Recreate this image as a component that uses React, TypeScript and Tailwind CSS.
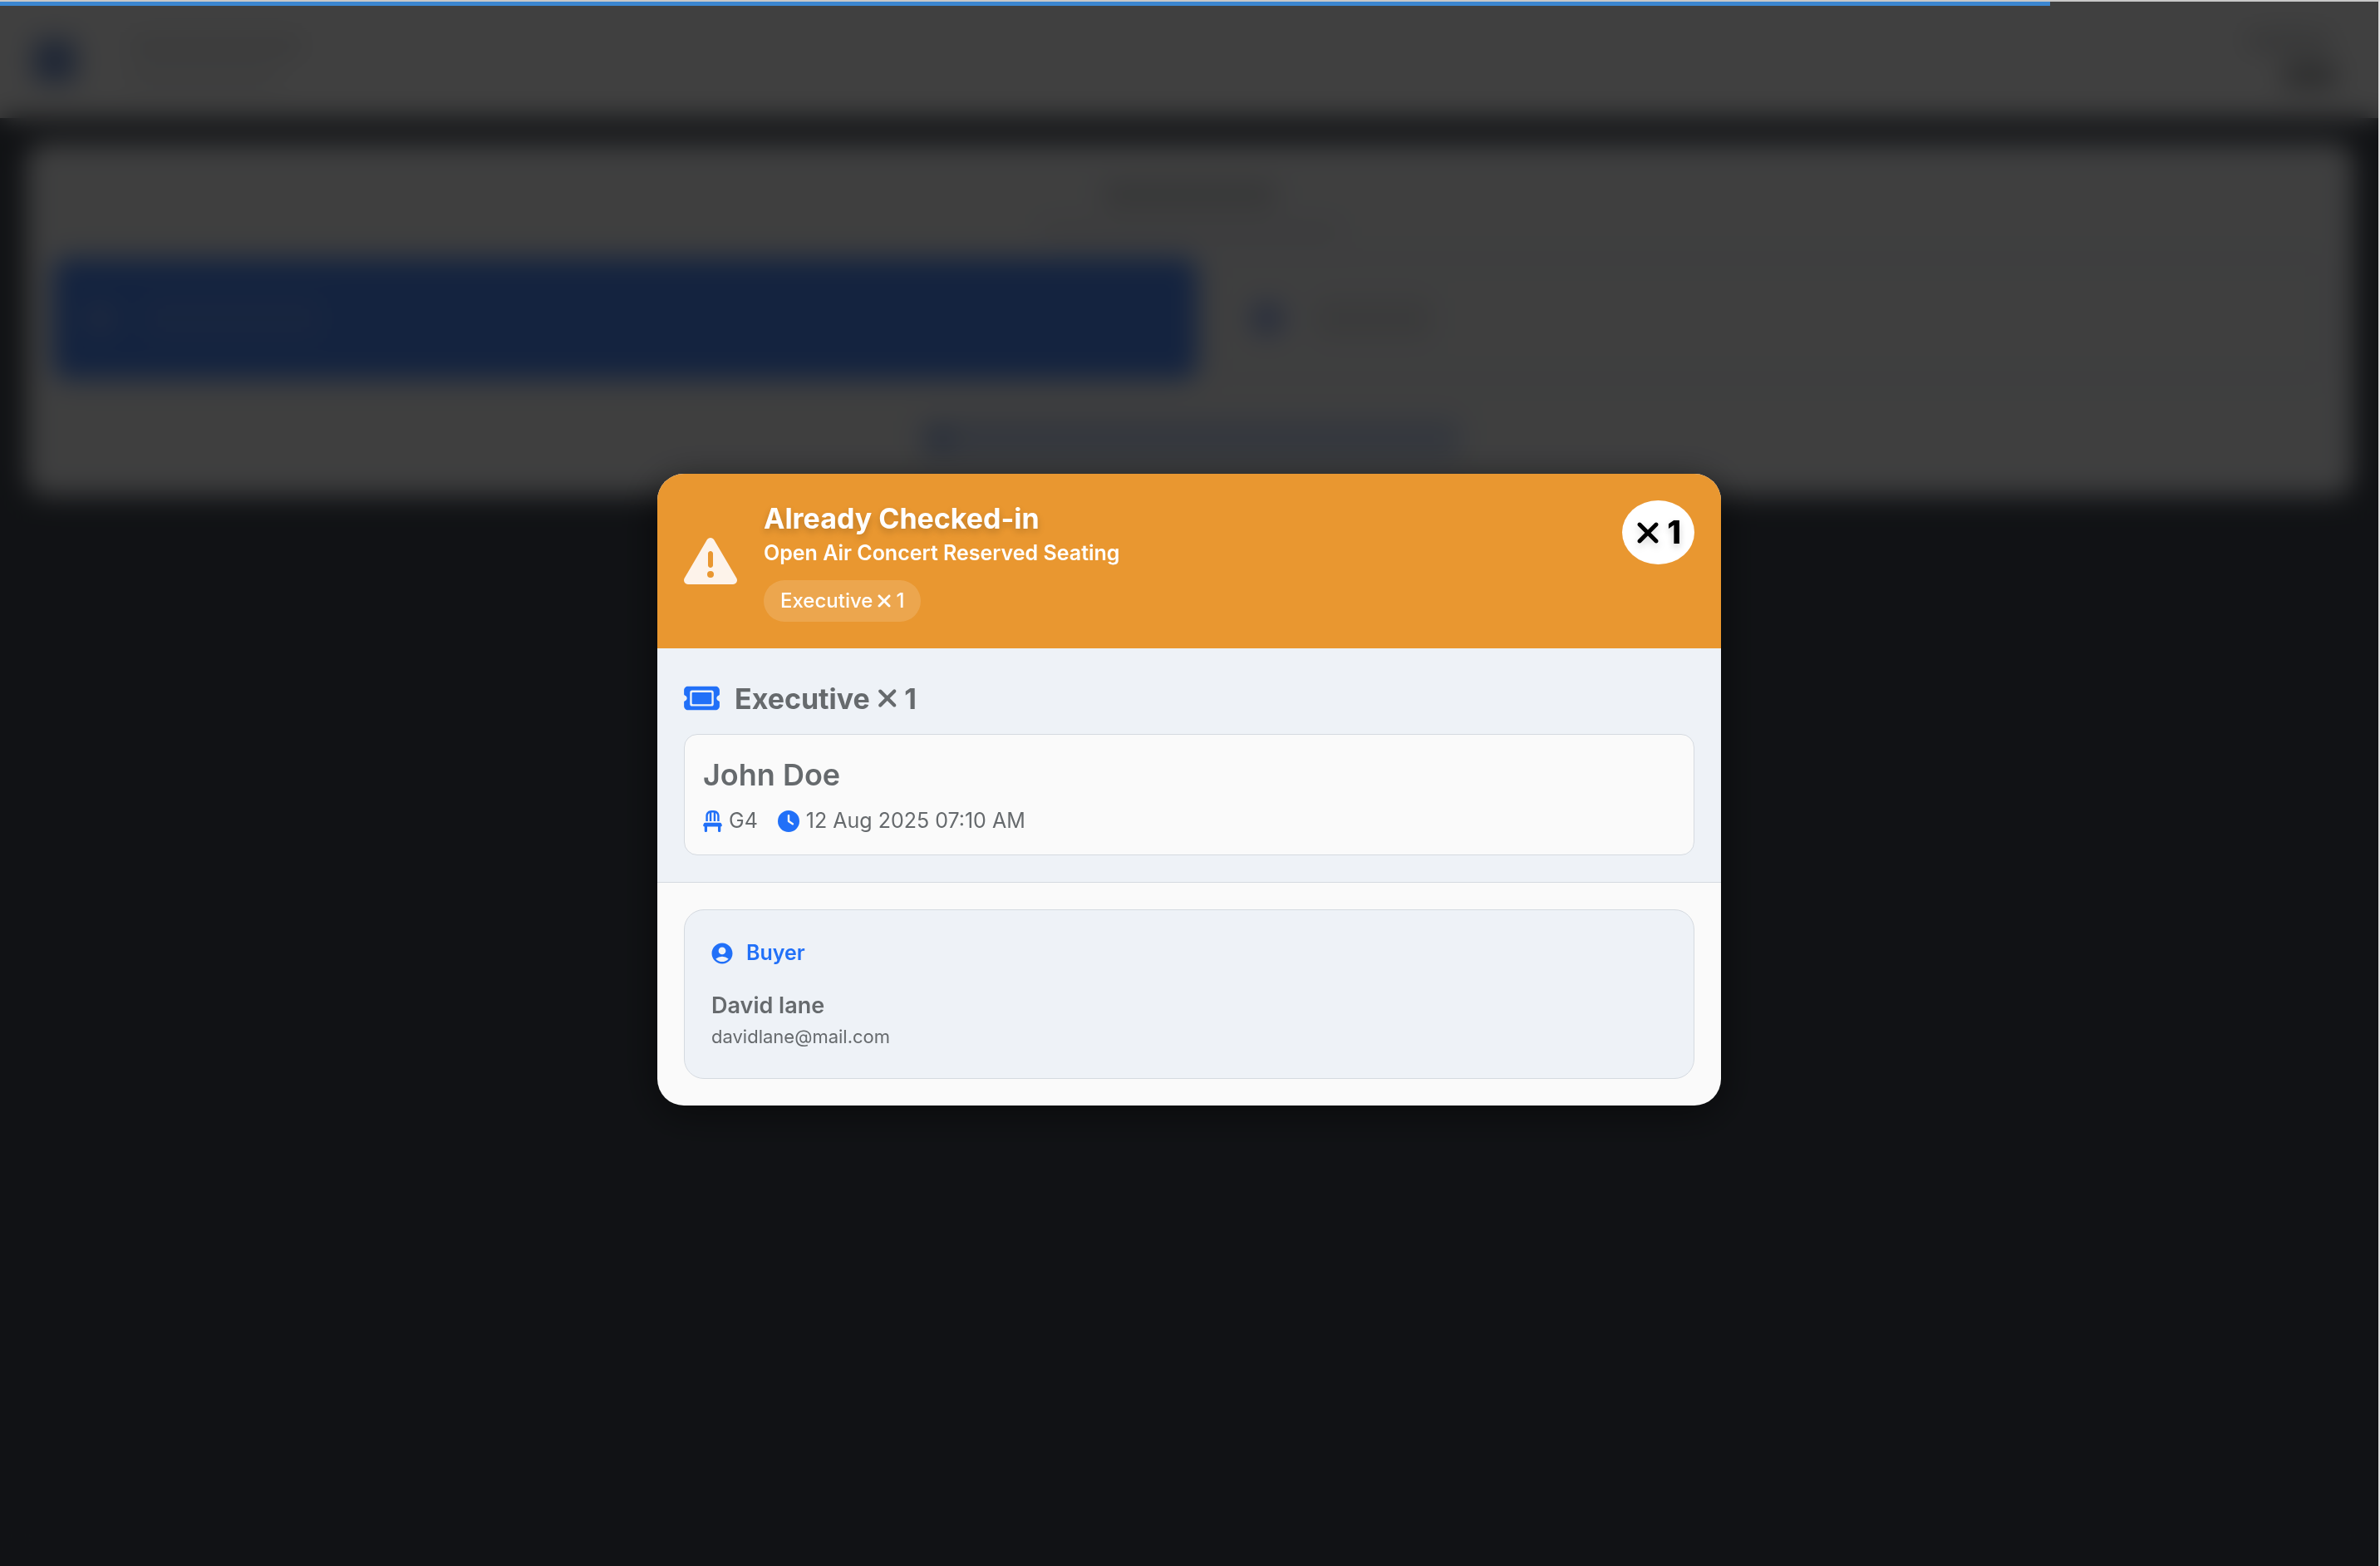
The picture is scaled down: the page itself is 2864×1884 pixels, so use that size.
import { FaChair, FaClock, FaTicket, FaTriangleExclamation, FaXmark } from 'react-icons/fa6';
import { MdAccountCircle } from 'react-icons/md';

function ScannerPage() {
  return (
    <div aria-hidden="true" className="min-h-screen bg-[#444a54]">
      <header className="flex h-[142px] items-center justify-between bg-white px-10 pt-1">
        <div className="flex items-center gap-16">
          <div className="size-13 rounded-lg bg-[#7c9ad4]" />
          <div className="flex flex-col gap-4">
            <div className="h-6 w-[208px] rounded bg-[#e8e9ea]" />
            <div className="h-5 w-[180px] rounded bg-[#eeeff0]" />
          </div>
        </div>
        <div className="flex flex-col items-end gap-4 pr-3">
          <div className="mr-2 h-5 w-[100px] rounded bg-[#d4d6d8]" />
          <div className="h-8 w-[64px] rounded bg-[#b4b6b8]" />
        </div>
      </header>
      <main className="px-8 pt-[30px]">
        <section className="flex flex-col rounded-3xl bg-[#f9fafc] px-8 pt-12 pb-11">
          <div className="flex flex-col items-center gap-5">
            <div className="h-7 w-[208px] rounded bg-[#d6d8da]" />
            <div className="h-5 w-[360px] rounded bg-[#ebebf0]" />
          </div>
          <div className="mt-[22px] grid grid-cols-[1377fr_1343fr] gap-4">
            <div className="flex h-[146px] items-center gap-10 rounded-2xl bg-[#508cfc] px-10">
              <div className="size-8 rounded bg-[#7ca4fc]" />
              <div className="h-12 w-[210px] rounded bg-[#6094f8]" />
            </div>
            <div className="flex h-[146px] items-center gap-10 rounded-2xl border-2 border-[#d0d8f0] px-12">
              <div className="size-9 rounded bg-[#9cb4f0]" />
              <div className="h-12 w-[140px] rounded bg-[#e9eaec]" />
            </div>
          </div>
          <div className="mt-12 flex h-12 w-[650px] items-center self-center rounded-lg bg-[#cfdcf4] px-3">
            <div className="size-6 rounded-full bg-[#86a4e0]" />
          </div>
        </section>
      </main>
    </div>
  );
}

function TicketCount({ name, count }: { name: string; count: number }) {
  return (
    <>
      <span>{name}</span>
      <FaXmark className="h-[1em] w-[0.75em]" />
      <span>{count}</span>
    </>
  );
}

function CheckInDialog() {
  return (
    <section
      role="dialog"
      aria-labelledby="checkin-title"
      className="w-full max-w-[1280px] overflow-hidden rounded-[32px] bg-[#fafafa] text-[#666a6d] shadow-[0_8px_48px_rgba(0,0,0,0.5)]"
    >
      <header className="flex items-center gap-8 bg-[#e99730] p-8 text-white">
        <FaTriangleExclamation className="size-16 shrink-0 text-[#fdf3ea]" />
        <div className="flex flex-col items-start">
          <h1
            id="checkin-title"
            className="text-[34px] leading-[44px] font-bold [text-shadow:0_4px_8px_rgba(0,0,0,0.2)]"
          >
            Already Checked-in
          </h1>
          <p className="text-[25px] leading-[38px] font-semibold">Open Air Concert Reserved Seating</p>
          <div className="mt-[14px] flex h-[50px] items-center gap-[5px] rounded-full bg-white/15 px-5 text-[24px] font-medium">
            <TicketCount name="Executive" count={1} />
          </div>
        </div>
        <div className="ml-auto flex h-[77px] items-center gap-2 self-start rounded-[50%] bg-white px-4 text-[38px] font-extrabold text-black [text-shadow:0_4px_8px_rgba(0,0,0,0.2)]">
          <FaXmark className="h-10 w-[30px] drop-shadow-[0_4px_4px_rgba(0,0,0,0.15)]" />
          <span>1</span>
        </div>
      </header>

      <div className="border-b border-[#d5dae0] bg-[#eef2f7] p-8">
        <h2 className="mb-[15px] flex h-14 items-center gap-2 text-[34px] font-bold">
          <FaTicket className="mr-[10px] h-[38px] w-[43px] text-[#2170f8]" />
          <TicketCount name="Executive" count={1} />
        </h2>
        <div className="rounded-2xl border border-[#d5dae0] bg-[#fafafa] px-[22px] py-5">
          <h3 className="text-[36px] leading-[56px] font-semibold">John Doe</h3>
          <div className="mt-2 flex h-10 items-center gap-6 text-[25px]">
            <span className="flex items-center gap-2">
              <FaChair className="h-[26px] w-[23px] text-[#2170f8]" />
              G4
            </span>
            <span className="flex items-center gap-2">
              <FaClock className="size-[26px] text-[#2170f8]" />
              12 Aug 2025 07:10 AM
            </span>
          </div>
        </div>
      </div>

      <div className="p-8">
        <div className="rounded-3xl border border-[#d5dae0] bg-[#eef2f7] p-8">
          <h3 className="flex h-10 items-center gap-4 text-[25px] font-semibold text-[#2170f8]">
            <MdAccountCircle className="-m-[2px] size-[30px]" />
            Buyer
          </h3>
          <p className="mt-6 text-[27px] leading-[38px] font-semibold">David lane</p>
          <p className="text-[22px] leading-9">davidlane@mail.com</p>
        </div>
      </div>
    </section>
  );
}

export default function App() {
  return (
    <div className="font-['Inter',sans-serif]">
      <ScannerPage />
      <div className="fixed inset-0 flex items-center justify-center bg-black/75 pt-4 pr-[2px] backdrop-blur-[16px]">
        <CheckInDialog />
      </div>
      <div className="fixed inset-0 border-t-2 border-r-2 border-t-[#c8c8c8] border-r-[#dcdcdc]">
        <div role="progressbar" aria-label="Time left" className="h-[5px] w-[86.2%] bg-[#3b86d0]" />
      </div>
    </div>
  );
}
